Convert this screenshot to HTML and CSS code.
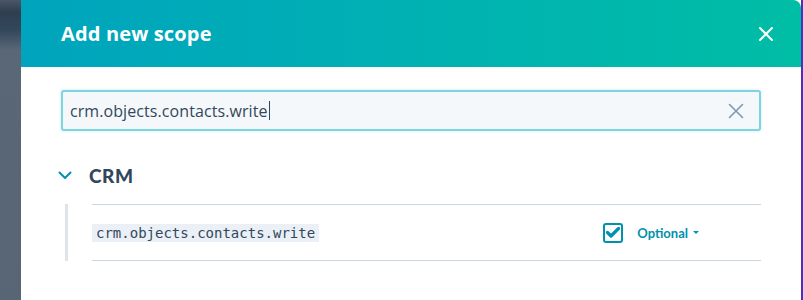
FILE: index.html
```html
<!DOCTYPE html>
<html>
<head>
<meta charset="UTF-8">
<title>Add new scope</title>
<link rel="stylesheet" href="styles.css">
</head>
<body>
	<div class="backdrop"></div>
	<div class="panel">
		<div class="panel-header">
			<h1 class="panel-title">Add new scope</h1>
			<button class="close-btn" type="button" aria-label="Close">
				<svg width="14" height="14" viewBox="0 0 14 14"><path d="M1 1L13 13M13 1L1 13" stroke="#fff" stroke-width="2" stroke-linecap="round"/></svg>
			</button>
		</div>

		<div class="panel-body">
			<!-- search -->
			<div class="search">
				<span class="search-text">crm.objects.contacts.write</span><span class="caret"></span>
				<svg class="search-clear" width="16" height="16" viewBox="0 0 16 16"><path d="M1.5 1.5L14.5 14.5M14.5 1.5L1.5 14.5" stroke="#7c98b6" stroke-width="1.6" stroke-linecap="round"/></svg>
			</div>

			<!-- group -->
			<div class="group-head">
				<svg class="chevron" width="14" height="9" viewBox="0 0 14 9"><path d="M1.5 1.5L7 7L12.5 1.5" fill="none" stroke="#0091ae" stroke-width="2" stroke-linecap="round" stroke-linejoin="round"/></svg>
				<span class="group-name">CRM</span>
			</div>

			<div class="group-list">
				<div class="scope-row">
					<code class="scope-code">crm.objects.contacts.write</code>
					<div class="scope-actions">
						<span class="checkbox">
							<svg width="14" height="11" viewBox="0 0 14 11"><path d="M1.5 5.5L5 9L12.5 1.5" fill="none" stroke="#0091ae" stroke-width="3.2" stroke-linecap="round" stroke-linejoin="round"/></svg>
						</span>
						<span class="optional">Optional <span class="optional-caret"></span></span>
					</div>
				</div>
			</div>
		</div>
	</div>
	<div class="edge"></div>
</body>
</html>
```

FILE: styles.css
```css
html, body{margin:0; height:100%;}
body{display:flex; background:#fff; font-family:"Lato", "Open Sans", sans-serif; color:#33475b; overflow:hidden;}

/* 뒤쪽 배경 */
.backdrop{width:21px; flex:none;
	background:linear-gradient(#4a5768 0px, #2f3e50 12px, #33475b 30px, #5a6777 50px, #586575 100%);}

.panel{flex:1; display:flex; flex-direction:column; background:#fff;}

/* 헤더 */
.panel-header{height:67px; flex:none; display:flex; align-items:center; justify-content:space-between;
	padding:0 28px 0 40px; border-top-right-radius:8px;
	background:linear-gradient(90deg, #00a4bd 0%, #00b0b4 45%, #00bda5 100%);}
.panel-title{margin:0; color:#fff; font-family:"Open Sans", sans-serif; font-size:20px; font-weight:700; letter-spacing:0.15px;}
.close-btn{border:0; background:none; padding:0; width:14px; height:14px; display:flex; cursor:pointer;}

.panel-body{padding:23px 40px 0 40px;}

/* 검색창 */
.search{height:37px; border:2px solid #81d3e0; border-radius:3px; background:#f5f8fa;
	display:flex; align-items:center; padding:0 15px 0 7px; box-shadow:0 0 3px rgba(0,164,189,0.25);}
.search-text{font-family:"Open Sans", sans-serif; font-size:16px; color:#33475b; letter-spacing:0.08px;}
.caret{display:inline-block; width:1px; height:19px; background:#33475b; margin-left:1px;}
.search-clear{margin-left:auto;}

/* 그룹 */
.group-head{display:flex; align-items:center; margin-top:31px; height:26px;}
.chevron{margin-left:-3px; margin-right:17px;}
.group-name{font-size:19px; font-weight:900; color:#33475b; letter-spacing:0.6px;}

.group-list{margin-top:16px; margin-left:4px; border-left:3px solid #dfe3eb; padding-left:24px;}

.scope-row{height:55px; border-top:1px solid #cbd6e2; border-bottom:1px solid #cbd6e2;
	display:flex; align-items:center; justify-content:space-between;}
.scope-code{font-family:"DejaVu Sans Mono", monospace; font-size:14px; background:#eaf0f6;
	color:#33475b; padding:1px 4px; line-height:16px;}

.scope-actions{display:flex; align-items:center; margin-right:62px;}
.checkbox{width:16px; height:16px; border:2px solid #0091ae; border-radius:3px; background:#fff;
	display:flex; align-items:center; justify-content:center;}
.optional{margin-left:14px; font-size:13px; font-weight:700; color:#0091ae; display:flex; align-items:center;}
.optional-caret{display:inline-block; margin-left:5px; border-left:3px solid transparent;
	border-right:3px solid transparent; border-top:3px solid #0091ae;}

.edge{width:2px; flex:none; background:#4b2fc1;}
```
